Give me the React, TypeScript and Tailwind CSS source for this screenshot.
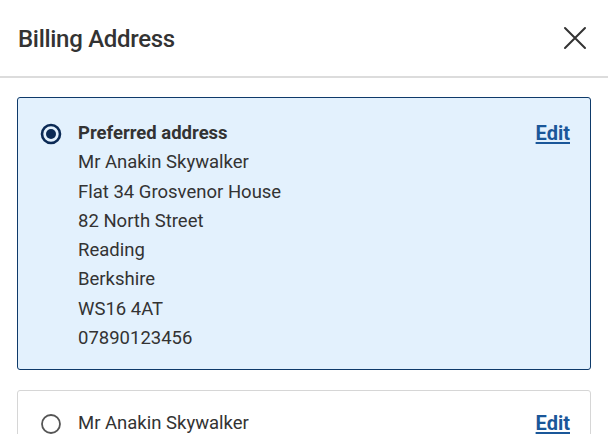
import React from "react";

function Radio({ checked }: { checked: boolean }) {
  return checked ? (
    <svg width="22" height="22" viewBox="0 0 22 22" className="shrink-0">
      <circle cx="11" cy="11" r="9" fill="none" stroke="#0b2a55" strokeWidth="2.6" />
      <circle cx="11" cy="11" r="5" fill="#0b2a55" />
    </svg>
  ) : (
    <svg width="22" height="22" viewBox="0 0 22 22" className="shrink-0">
      <circle cx="11" cy="11" r="9" fill="none" stroke="#555" strokeWidth="1.8" />
    </svg>
  );
}

export default function App() {
  const lines = [
    "Mr Anakin Skywalker",
    "Flat 34 Grosvenor House",
    "82 North Street",
    "Reading",
    "Berkshire",
    "WS16 4AT",
    "07890123456",
  ];
  return (
    <div
      className="w-[608px] h-[434px] overflow-hidden bg-white text-[#333]"
      style={{ fontFamily: "Roboto, 'Liberation Sans', sans-serif" }}
    >
      <div className="h-[78px] flex items-center justify-between pl-[18px] pr-[21px] border-b-2 border-[#dcdcdc]">
        <h1 className="text-[24px] font-medium tracking-[-0.3px] text-[#333] pt-[1px]">Billing Address</h1>
        <svg width="24" height="24" viewBox="0 0 24 24">
          <path d="M2 2 L22 22 M22 2 L2 22" stroke="#333" strokeWidth="2" strokeLinecap="round" />
        </svg>
      </div>
      <div className="px-[17px] pt-[19px] flex flex-col gap-[20px]">
        <div className="border border-[#0e3a6a] bg-[#e3f1fd] rounded-[3px] pl-[22px] pr-[20px] pt-[21px] pb-[16px] flex gap-[16px]">
          <div className="h-[29px] flex items-center">
            <Radio checked />
          </div>
          <div className="flex-1 text-[18.5px] leading-[29.3px]">
            <div className="flex justify-between items-center">
              <span className="font-bold">Preferred address</span>
              <a className="text-[20px] font-bold text-[#1a5799] underline underline-offset-2">Edit</a>
            </div>
            {lines.map((l) => (
              <div key={l}>{l}</div>
            ))}
          </div>
        </div>
        <div className="border border-[#d6d6d6] bg-white rounded-[3px] pl-[22px] pr-[20px] pt-[18px] pb-[18px] flex gap-[16px]">
          <div className="h-[29px] flex items-center">
            <Radio checked={false} />
          </div>
          <div className="flex-1 text-[18.5px] leading-[29.3px]">
            <div className="flex justify-between items-center">
              <span>Mr Anakin Skywalker</span>
              <a className="text-[20px] font-bold text-[#1a5799] underline underline-offset-2">Edit</a>
            </div>
          </div>
        </div>
      </div>
    </div>
  );
}
